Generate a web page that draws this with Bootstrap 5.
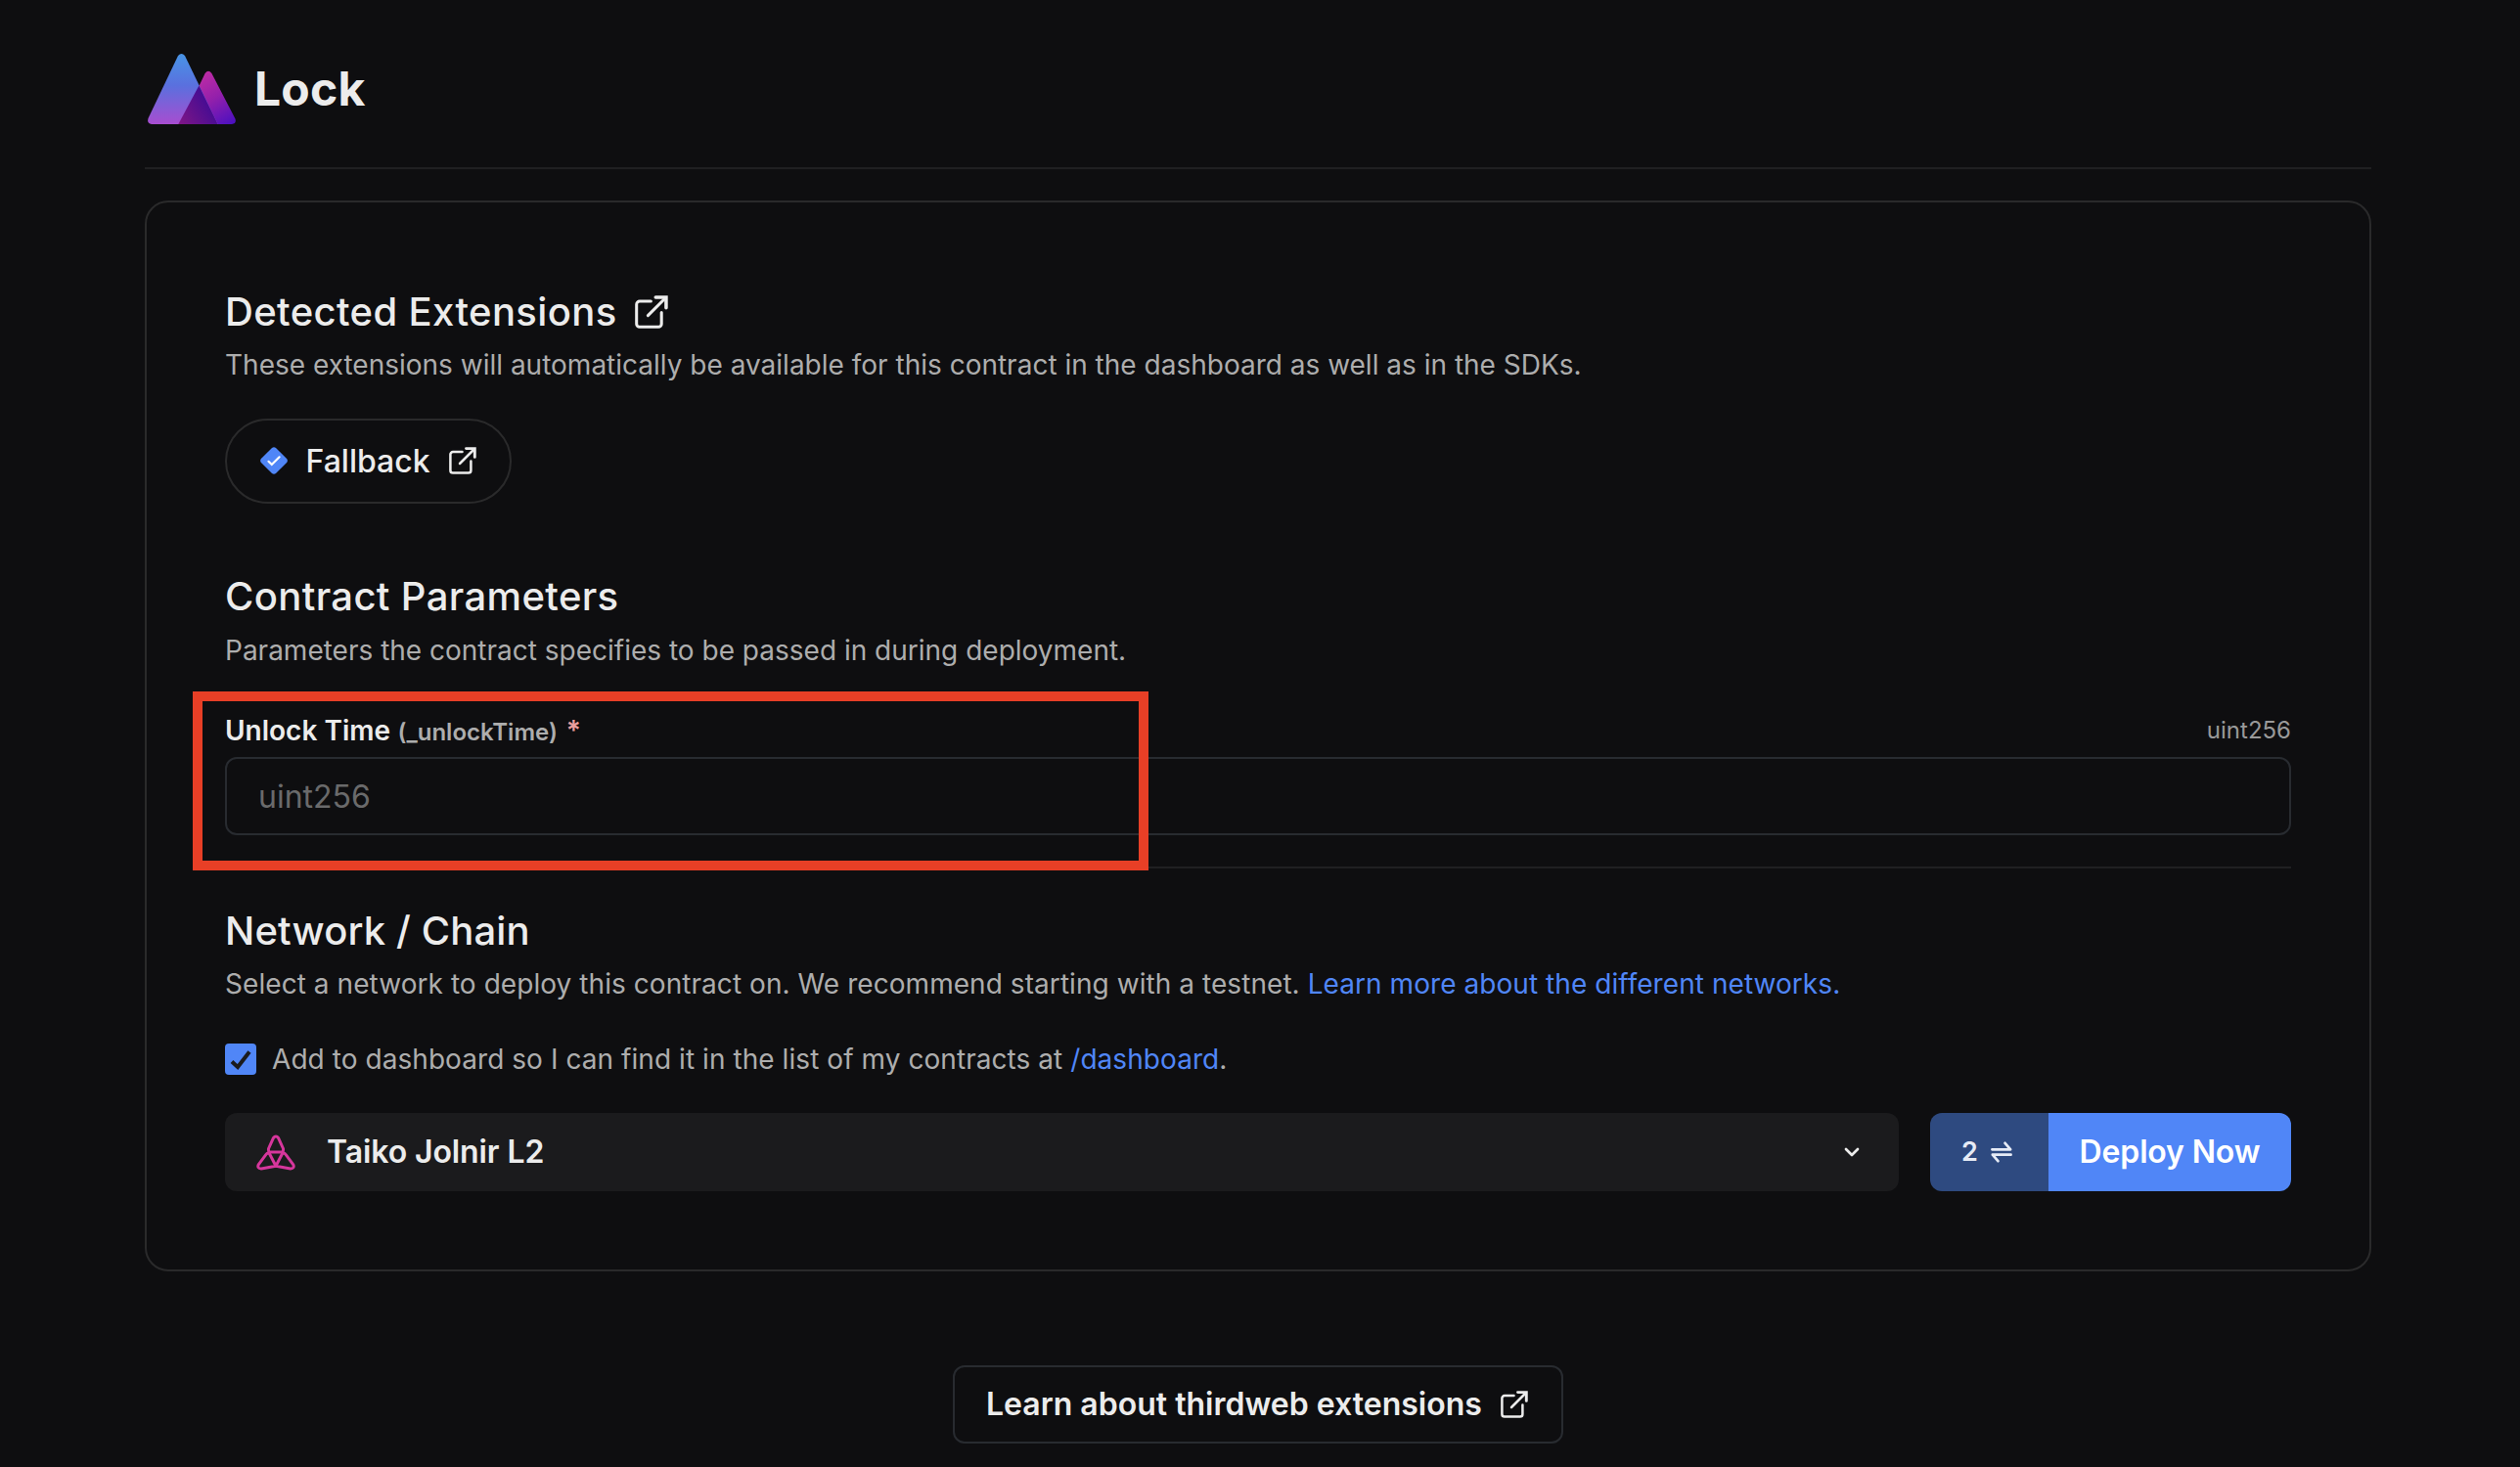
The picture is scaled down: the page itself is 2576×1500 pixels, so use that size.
<!DOCTYPE html>
<html lang="en" data-bs-theme="dark">
<head>
<meta charset="utf-8">
<meta name="viewport" content="width=device-width, initial-scale=1">
<title>Lock</title>
<link href="https://cdn.jsdelivr.net/npm/bootstrap@5.3.0/dist/css/bootstrap.min.css" rel="stylesheet">
<style>
body{background:#0e0e10;color:#ececec;font-family:Inter,"Liberation Sans",sans-serif;height:1500px;overflow:hidden}
.page{width:2276px;margin-left:148px}
.page-head{height:171px;padding:55px 0 0 3px;gap:19px}
.page-head svg{width:90px;height:72px}
.title{font-size:48px;font-weight:700;line-height:72px;margin:0;color:#ececec;letter-spacing:.2px}
.rule{height:2px;background:#202022}
.rule-field{margin:32px 0 39.5px}
.panel{margin-top:32px;height:1095px;border:2px solid #2a2a2b;border-radius:24px;padding:87px 80px 0;background:none;color:#ececec}
.sec-title{font-size:40px;font-weight:500;line-height:48px;margin:0 0 10px;letter-spacing:.37px;color:#ececec}
.sec-title.tight{letter-spacing:.15px;margin-bottom:9px}
.sec-title.first{padding-top:1px;margin-bottom:9px}
.sec-title svg{margin-left:18.5px}
.desc{font-size:28px;line-height:42px;color:#adadad;margin:0}
.desc.net,.agree span{letter-spacing:.06px}
a{color:#5086f7;text-decoration:none}
.pill{width:293px;height:87px;margin-top:34px;margin-bottom:71px;border:2px solid #2a2a2b;border-radius:44px;padding:0 0 1px 34px;font-size:32px;font-weight:500}
.pill span{margin:1px 19px 0 18.5px}
.field-wrap{position:relative;margin-top:43px}
.lab-row{height:36px}
.lab{font-size:28px;font-weight:600;line-height:36px}
.lab small{font-size:24px;color:#adadad;font-weight:600;margin-left:7.5px}
.lab .req{color:#eb9f9d;margin-left:9px}
.kind{font-size:24px;line-height:35px;color:#999}
.form-control.field{height:80px;margin-top:9px;border:2px solid #282b30;border-radius:12px;background:transparent;font-size:32px;padding:0 32px}
.field::placeholder{color:#6a6a6b;opacity:1}
.marker{position:absolute;left:-33px;top:-22px;width:977px;height:183px;border:10px solid #e83f26;pointer-events:none}
.agree{margin-top:40.5px;gap:16px;font-size:28px;line-height:32px;color:#adadad}
.deploy-row{margin-top:39px;gap:32px}
.chain{height:80px;background:#1b1b1d;border-radius:12px;padding:0 40px 0 32px;font-size:32px;font-weight:600;color:#ececec}
.chain .nm{margin-left:32px;letter-spacing:-.1px}
.deploy{width:369px;height:80px;border-radius:12px;overflow:hidden;color:#fff;font-weight:600}
.steps{width:121px;background:#2e4a80;font-size:27px;color:#e6ebf5;padding-left:32px;gap:13px}
.go{background:#5086f7;font-size:32px;letter-spacing:-.15px}
.learn{width:624px;height:80px;margin:96px auto 0;border:2px solid #282b30;border-radius:12px;font-size:32px;font-weight:600;padding-left:32px;gap:19px}
</style>
</head>
<body>
<svg width="0" height="0" class="position-absolute">
<symbol id="ext" viewBox="0 0 28 28"><path d="M13.500 5H4A2.600 2.600 0 0 0 1.400 7.600V24A2.600 2.600 0 0 0 4 26.600H19.800A2.600 2.600 0 0 0 22.400 24V14.500M11 17L25.500 2.500" fill="none" stroke="currentColor" stroke-width="2.500" stroke-linecap="round" stroke-linejoin="round"/><path d="M17.500 1.600H26.300V10.400" fill="none" stroke="currentColor" stroke-width="2.900" stroke-linecap="round" stroke-linejoin="miter"/></symbol>
</svg>
<main class="page">
<header class="page-head d-flex align-items-start">
<svg viewBox="0 0 90 72">
<defs>
<linearGradient id="g1" x1="0" y1="0" x2="0" y2="1"><stop offset="0" stop-color="#4894e6"/><stop offset=".45" stop-color="#5a70de"/><stop offset="1" stop-color="#a84dd0"/></linearGradient>
<linearGradient id="g2" x1=".3" y1="0" x2=".95" y2="1"><stop offset="0" stop-color="#c72fa4"/><stop offset=".5" stop-color="#9420ab"/><stop offset="1" stop-color="#4a10c0"/></linearGradient>
<linearGradient id="g3" x1="0" y1="1" x2=".8" y2=".5"><stop offset="0" stop-color="#801685"/><stop offset="1" stop-color="#460c93"/></linearGradient>
</defs>
<path d="M52.400 33L58.600 20Q62 15.500 65.400 20L89.500 66.500Q91 71.500 86 72H31.300z" fill="url(#g2)"/>
<path d="M31 2Q34.500-1.800 38 2L71.700 72H4Q-1 71.500 .5 66z" fill="url(#g1)"/>
<path d="M52.400 32.500L71.700 72H31.300z" fill="url(#g3)"/>
</svg>
<h1 class="title">Lock</h1>
</header>
<div class="rule"></div>
<section class="panel card">
<h2 class="sec-title first d-flex align-items-center"><span>Detected Extensions</span><svg width="34" height="34"><use href="#ext"/></svg></h2>
<p class="desc">These extensions will automatically be available for this contract in the dashboard as well as in the SDKs.</p>
<a class="pill d-flex align-items-center text-reset" href="#">
<svg width="28" height="28" viewBox="0 0 28 28"><path d="M12 .9Q14-.6 16 .9L27.100 12Q28.600 14 27.100 16L16 27.100Q14 28.600 12 27.100L.9 16Q-.6 14 .9 12z" fill="#5086f7"/><path d="M8.500 14.800L11.800 18L19.600 10.300" fill="none" stroke="#fff" stroke-width="2.200" stroke-linecap="round"/></svg>
<span>Fallback</span><svg width="28" height="28"><use href="#ext"/></svg></a>
<h2 class="sec-title">Contract Parameters</h2>
<p class="desc">Parameters the contract specifies to be passed in during deployment.</p>
<div class="field-wrap">
<div class="lab-row d-flex justify-content-between"><label class="lab" for="unlock"><span>Unlock Time</span><small>(_unlockTime)</small><span class="req">*</span></label><span class="kind">uint256</span></div>
<input id="unlock" class="form-control field" placeholder="uint256">
<div class="marker"></div>
</div>
<div class="rule rule-field"></div>
<h2 class="sec-title tight">Network / Chain</h2>
<p class="desc net">Select a network to deploy this contract on. We recommend starting with a testnet. <a href="#">Learn more about the different networks.</a></p>
<div class="agree d-flex align-items-center">
<svg width="32" height="32" viewBox="0 0 32 32"><rect width="32" height="32" rx="4" fill="#5086f7"/><path d="M7 18.500L13 24L25 8.500" fill="none" stroke="#1b1b1d" stroke-width="4"/></svg>
<span>Add to dashboard so I can find it in the list of my contracts at <a href="#">/dashboard</a>.</span>
</div>
<div class="deploy-row d-flex">
<button class="chain btn flex-grow-1 d-flex align-items-center border-0">
<svg width="40" height="37" viewBox="0 0 40 37" fill="none" stroke="#d6369c" stroke-width="3" stroke-linejoin="round"><path d="M17.300 3.800Q20 .4 22.700 3.800L27.500 14.500Q28 18 25.500 18H14.500Q12 18 12.500 14.500z"/><path d="M13.400 19.500L20 32.200L5 35Q.6 34.600 2.200 30.800L9.800 20.600Q12 18 13.400 19.500z"/><path d="M26.600 19.500L20 32.200L35 35Q39.400 34.600 37.800 30.800L30.200 20.600Q28 18 26.600 19.500z"/></svg>
<span class="nm">Taiko Jolnir L2</span>
<svg class="ms-auto" width="16" height="12" viewBox="0 0 16 12"><path d="M2 3L8 9L14 3" fill="none" stroke="#ececec" stroke-width="2.700" stroke-linecap="round" stroke-linejoin="round"/></svg>
</button>
<div class="deploy d-flex">
<span class="steps d-flex align-items-center"><span>2</span><svg width="22" height="22" viewBox="0 0 22 22" fill="none" stroke="#e6ebf5" stroke-width="2.700" stroke-linecap="round" stroke-linejoin="round"><path d="M1.400 8.300H20.200L14.600 1.800M20.600 13.700H1.800L7.400 20.200"/></svg></span>
<span class="go flex-grow-1 d-flex align-items-center justify-content-center">Deploy Now</span>
</div>
</div>
</section>
<a class="learn d-flex align-items-center text-reset" href="#"><span>Learn about thirdweb extensions</span><svg width="28" height="28"><use href="#ext"/></svg></a>
</main>
<script src="https://cdn.jsdelivr.net/npm/bootstrap@5.3.0/dist/js/bootstrap.bundle.min.js"></script>
</body>
</html>
